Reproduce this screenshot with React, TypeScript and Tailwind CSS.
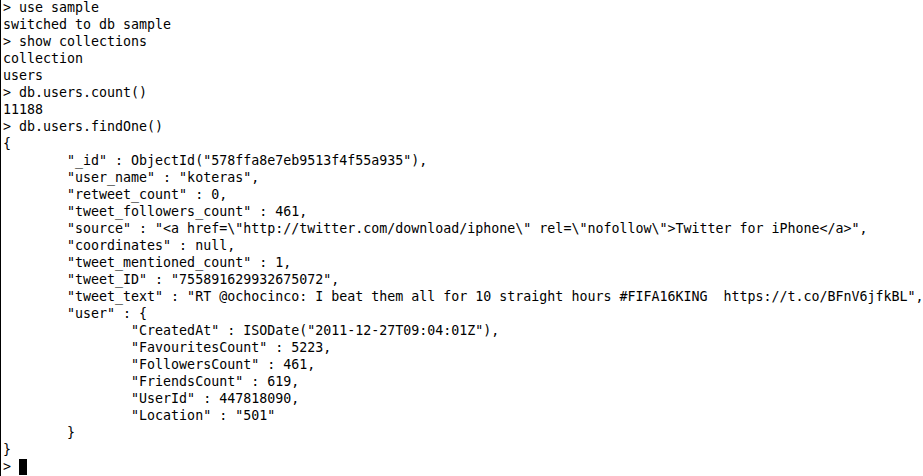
const lines: string[] = [
  "> use sample",
  "switched to db sample",
  "> show collections",
  "collection",
  "users",
  "> db.users.count()",
  "11188",
  "> db.users.findOne()",
  "{",
  '        "_id" : ObjectId("578ffa8e7eb9513f4f55a935"),',
  '        "user_name" : "koteras",',
  '        "retweet_count" : 0,',
  '        "tweet_followers_count" : 461,',
  '        "source" : "<a href=\\"http://twitter.com/download/iphone\\" rel=\\"nofollow\\">Twitter for iPhone</a>",',
  '        "coordinates" : null,',
  '        "tweet_mentioned_count" : 1,',
  '        "tweet_ID" : "755891629932675072",',
  '        "tweet_text" : "RT @ochocinco: I beat them all for 10 straight hours #FIFA16KING  https://t.co/BFnV6jfkBL",',
  '        "user" : {',
  '                "CreatedAt" : ISODate("2011-12-27T09:04:01Z"),',
  '                "FavouritesCount" : 5223,',
  '                "FollowersCount" : 461,',
  '                "FriendsCount" : 619,',
  '                "UserId" : 447818090,',
  '                "Location" : "501"',
  "        }",
  "}",
];

export default function App() {
  return (
    <div className="w-[923px] h-[476px] overflow-hidden bg-white border-l border-black text-black">
      <div
        className="pl-[2px] -mt-[1px] text-[13.3px] leading-[17px] whitespace-pre"
        style={{ fontFamily: '"DejaVu Sans Mono", monospace' }}
      >
        {lines.map((l, i) => (
          <div key={i}>{l}</div>
        ))}
        <div className="flex items-center">
          <span>{"> "}</span>
          <span className="inline-block w-[8px] h-[16px] bg-black" />
        </div>
      </div>
    </div>
  );
}
